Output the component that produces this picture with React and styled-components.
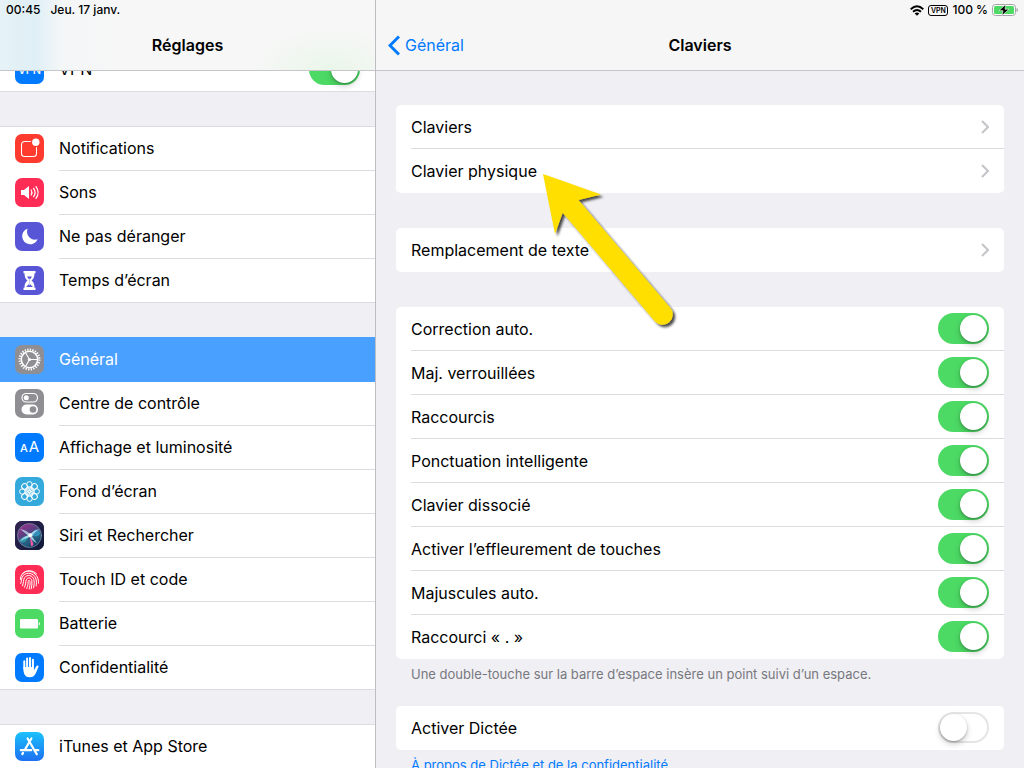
import React from 'react';
import styled, { createGlobalStyle, css } from 'styled-components';

const BLUE = '#007aff';
const GREEN = '#4cd964';
const SEPARATOR = '#dcdce0';

const GlobalStyle = createGlobalStyle`
  * {
    box-sizing: border-box;
  }
  body {
    margin: 0;
    background: #efeff4;
    color: #000;
    font-family: Inter, 'Liberation Sans', sans-serif;
    font-size: 16px;
    line-height: 20px;
  }
`;

const Screen = styled.div`
  display: grid;
  grid-template-columns: minmax(0, 47fr) minmax(0, 81fr);
  height: 100vh;
  overflow: hidden;
`;

const Pane = styled.div`
  position: relative;
  overflow: hidden;
`;

const Sidebar = styled(Pane)`
  border-right: 1px solid #bdbdc2;
`;

const Header = styled.header`
  position: sticky;
  top: 0;
  z-index: 1;
  background: #f6f6f7;
  border-bottom: 1px solid #c6c6ca;
`;

const SidebarHeader = styled(Header)`
  background: radial-gradient(ellipse 80px 45px at 88% 100%, #eaf6ea, transparent),
    linear-gradient(to right, #e6f2f6 0, #dfeff6 35px, #f3f6f7 60px, #f7f7f7 120px);
`;

const StatusBar = styled.div`
  display: flex;
  align-items: center;
  justify-content: ${({ $end }) => ($end ? 'flex-end' : 'flex-start')};
  gap: ${({ $end }) => ($end ? 4 : 10)}px;
  height: 20px;
  padding: 0 6px;
  font-size: 12px;
  font-weight: 500;
`;

const VpnBadge = styled.span`
  border: 1px solid #000;
  border-radius: 3px;
  width: 20px;
  height: 11px;
  font-size: 7px;
  font-weight: 600;
  line-height: 9px;
  text-align: center;
`;

const NavBar = styled.div`
  display: grid;
  grid-template-columns: 1fr auto 1fr;
  align-items: center;
  height: 50px;
  padding: 0 12px;
`;

const Title = styled.h1`
  grid-column: 2;
  margin: 0;
  font-size: 16px;
  font-weight: 600;
`;

const BackButton = styled.button`
  justify-self: start;
  display: flex;
  align-items: center;
  gap: 5px;
  padding: 0;
  border: 0;
  background: none;
  color: ${BLUE};
  font: inherit;
`;

const Menu = styled.nav`
  display: grid;
  gap: 34px;
  margin-top: -24px;
`;

const MenuGroup = styled.div`
  border-top: 1px solid ${SEPARATOR};
  background: #fff;
`;

const menuRow = css`
  display: flex;
  height: 44px;
  padding-left: 15px;
  gap: 15px;
  align-items: flex-start;
  color: inherit;
  text-decoration: none;
`;

const MenuLink = styled.a`
  ${menuRow}

  &:last-child {
    border-bottom: 1px solid ${SEPARATOR};
  }
  ${({ $active }) =>
    $active &&
    css`
      background: #4aa0ff;
      color: #fff;
      box-shadow: 0 -1px #4aa0ff;
    `}
`;

const MenuToggle = styled.label`
  ${menuRow}
  border-bottom: 1px solid ${SEPARATOR};
`;

const MenuLabel = styled.span`
  flex: 1;
  display: flex;
  align-items: center;
  justify-content: space-between;
  align-self: stretch;
  padding: 0 15px 1px 0;
  border-bottom: ${({ $last }) => ($last ? 0 : 1)}px solid ${({ $active }) => ($active ? 'transparent' : SEPARATOR)};
`;

const Tile = styled.span`
  display: flex;
  align-items: center;
  justify-content: center;
  width: 29px;
  height: 29px;
  margin-top: 7px;
  border-radius: 7px;
  overflow: hidden;
  background: ${({ $color }) => $color};
  color: #fff;
`;

const TileText = styled.span`
  display: flex;
  align-items: baseline;
  gap: 1px;
  font-size: 11px;
  font-weight: 500;
`;

const BigLetter = styled.span`
  font-size: 15px;
  font-weight: 400;
`;

const Content = styled.main`
  position: relative;
  padding: 34px 20px 0;
`;

const Card = styled.section`
  margin-top: ${({ $gap = 35 }) => $gap}px;
  border-radius: 5px;
  background: #fff;
`;

const cardRow = css`
  display: flex;
  align-items: center;
  justify-content: space-between;
  height: 44px;
  margin-left: 15px;
  padding-right: 15px;
  border-bottom: 1px solid ${SEPARATOR};
  color: inherit;
  text-decoration: none;

  &:last-child {
    border-bottom-color: transparent;
  }
`;

const LinkRow = styled.a`
  ${cardRow}
`;

const ToggleRow = styled.label`
  ${cardRow}
`;

const Note = styled.p`
  margin: 7px 15px 0;
  color: #78787e;
  font-size: 13px;
  line-height: 16px;
`;

const NoteLink = styled.a`
  color: ${BLUE};
  text-decoration: none;
`;

const Switch = styled.input.attrs({ type: 'checkbox' })`
  appearance: none;
  display: flex;
  align-items: center;
  width: 51px;
  height: 31px;
  margin: 0;
  padding: 0 2px;
  border-radius: 16px;
  background: #fff;
  box-shadow: inset 0 0 0 2px #e5e5e5;

  &::before {
    content: '';
    width: 27px;
    height: 27px;
    border-radius: 50%;
    background: #fff;
    box-shadow: 0 3px 6px rgba(0, 0, 0, 0.2), 0 1px 2px rgba(0, 0, 0, 0.25);
  }
  &:checked {
    justify-content: flex-end;
    background: ${GREEN};
    box-shadow: none;
  }
`;

const Pointer = styled.svg`
  position: absolute;
  top: 97px;
  left: 161px;
  pointer-events: none;
`;

const Glyph = ({ children }) => (
  <svg width="29" height="29" viewBox="0 0 29 29" fill="none" stroke="#fff" strokeLinecap="round" aria-hidden="true">
    {children}
  </svg>
);

const NotificationsIcon = () => (
  <Glyph>
    <path d="M15.5 7.5H9.8Q6.5 7.5 6.5 10.8V19.2Q6.5 22.5 9.8 22.5H18.2Q21.5 22.5 21.5 19.2V13.5" strokeWidth="1.1" />
    <circle cx="20.8" cy="8.2" r="3.7" fill="#fff" stroke="none" />
  </Glyph>
);

const SoundsIcon = () => (
  <Glyph>
    <path d="M6 12h3l5-4v13l-5-4H6z" fill="#fff" stroke="none" />
    <path d="M16.2 12q1.6 2.5 0 5M18.6 10.300q3 4.2 0 8.4M21 8.6q4.200 5.900 0 11.800" strokeWidth="1.2" />
  </Glyph>
);

const MoonIcon = () => (
  <Glyph>
    <path d="M12.6 6.7A8 8 0 1 0 22.600 17.300A8.100 8.100 0 0 1 12.600 6.700z" fill="#fff" stroke="none" />
  </Glyph>
);

const HourglassIcon = () => (
  <Glyph>
    <path d="M8.5 5h12v2.300h-1c0 4-1 5.700-3 7.200 2 1.500 3 3.200 3 7.200h1V24h-12v-2.300h1c0-4 1-5.700 3-7.200-2-1.500-3-3.200-3-7.200h-1z" fill="#fff" stroke="none" />
    <path d="M12 10.500h5l-2 3v4.500l3 3h-7l3-3v-4.500z" fill="#5856d6" stroke="none" />
    <path d="M14.500 13v6" strokeWidth="0.700" />
  </Glyph>
);

const GearIcon = () => (
  <Glyph>
    <circle cx="14.500" cy="14.500" r="8.200" strokeWidth="1.600" />
    <circle cx="14.500" cy="14.500" r="9.900" strokeWidth="2.200" strokeLinecap="butt" strokeDasharray="1.300 1.291" />
    <circle cx="14.500" cy="14.500" r="1.600" fill="#fff" stroke="none" />
    <path d="M14.500 14.500h8M14.500 14.500l-4-7M14.500 14.500l-4 7" strokeWidth="1.100" />
  </Glyph>
);

const ControlIcon = () => (
  <Glyph>
    <rect x="7" y="4.500" width="15.500" height="8.500" rx="4.250" strokeWidth="1.200" />
    <circle cx="11.300" cy="8.750" r="2.500" fill="#fff" stroke="none" />
    <rect x="6.500" y="15.500" width="16.500" height="10" rx="5" fill="#fff" stroke="none" />
    <circle cx="18" cy="20.500" r="3.300" fill="#8e8e93" stroke="none" />
  </Glyph>
);

const PETALS = [0, 45, 90, 135, 180, 225, 270, 315];

const WallpaperIcon = () => (
  <Glyph>
    {PETALS.map(angle => (
      <g key={angle} transform={`rotate(${angle} 14.5 14.5)`}>
        <circle cx="14.5" cy="7.400" r="2.800" strokeWidth="1" />
        <circle cx="14.500" cy="11.700" r="1.900" strokeWidth="0.800" />
      </g>
    ))}
  </Glyph>
);

const SiriIcon = () => (
  <Glyph>
    <defs>
      <linearGradient id="siriBack" x1="0" y1="0" x2="1" y2="1">
        <stop offset="0" stopColor="#352452" />
        <stop offset="1" stopColor="#0d1938" />
      </linearGradient>
      <linearGradient id="siriOrb" x1="0.200" y1="0" x2="0.800" y2="1">
        <stop offset="0" stopColor="#9c2f8c" />
        <stop offset="0.450" stopColor="#4f4380" />
        <stop offset="0.700" stopColor="#22607f" />
        <stop offset="1" stopColor="#152c58" />
      </linearGradient>
    </defs>
    <rect width="29" height="29" fill="url(#siriBack)" stroke="none" />
    <circle cx="14.500" cy="14.500" r="12" fill="url(#siriOrb)" stroke="#8297ae" strokeWidth="0.700" />
    <path d="M14 14Q6 16 4 20Q10 25 14 15z" fill="#21cfc7" stroke="none" opacity="0.550" />
    <path d="M15 14Q21 7 24 9Q28 17 16 15z" fill="#31b5df" stroke="none" opacity="0.600" />
    <path d="M15 15l1 10q3 0 2-3z" fill="#ff56a7" stroke="none" />
    <path d="M5 8Q11 9 15 13Q19 9 24 8Q19 12 17 15Q19 19 22 22Q17 20 15 16Q9 18 5 20Q9 15 13 14.500Q9 11 5 8z" fill="#c9f3ff" stroke="none" opacity="0.700" />
    <circle cx="15.200" cy="14.300" r="2" fill="#fff" stroke="none" />
  </Glyph>
);

const TouchIcon = () => (
  <Glyph>
    <g strokeWidth="1">
      <path d="M7.500 8.600a9.400 9.400 0 0 1 14 0" />
      <path d="M5.300 14.500c.4-9 9.200-9.500 12-7.300 4.500 2 6.500 6.500 6.200 11" />
      <path d="M5.800 18.500c1-3 .3-5.500 2.300-7.800 4-4.500 10.500-2.300 12.500 2.300 1 2.500 1 5.500.6 8" />
      <path d="M7.500 20.800c1.300-3 .6-5.800 2-8 2.600-4 8.500-2.500 9.400 2 .5 2.500.3 5.500-.3 8" />
      <path d="M9.500 22.300c1.500-3 1-5.500 1.800-7.500 1.300-3 5.300-2.200 5.600 1 .2 3-.1 5.500-.7 8" />
      <path d="M11.700 23.500c1.500-3 1.300-5 1.500-7 .4-2 1.700-1.500 1.800.2.200 2.800-.2 5-.9 7.300" />
    </g>
  </Glyph>
);

const BatteryIcon = () => (
  <Glyph>
    <rect x="5" y="10" width="18" height="9.500" rx="1" fill="#fff" stroke="none" />
    <path d="M23.800 12.800q2.400 2 0 4z" fill="#fff" stroke="none" />
  </Glyph>
);

const HandIcon = () => (
  <Glyph>
    <path d="M9.300 15V8.200M12.100 14V5.600M15 14V5M17.900 15V6.700" strokeWidth="2" />
    <path d="M8.300 14h10.600v3.200l2.400-4c.7-1.100 2.700-.7 2.200.6-1.100 2.700-2.200 5.700-3.600 8q-1.500 2.500-5 2.500-4.500 0-5.700-3.500-.9-2.300-.9-5z" fill="#fff" stroke="none" />
  </Glyph>
);

const AppStoreIcon = () => (
  <Glyph>
    <path d="M16.400 6.500L9.700 18M8 20.900l-.7 1.200M12.600 6.500l9.200 15.700M5.800 18.200h10.400M20.500 18.200h2.800" strokeWidth="2.200" />
  </Glyph>
);

const Chevron = () => (
  <svg width="8" height="14" viewBox="0 0 8 14" fill="none" stroke="#c4c4c9" strokeWidth="2" aria-hidden="true">
    <path d="M1 1l6 6-6 6" />
  </svg>
);

const MAIN_MENU = [
  [
    { label: 'Notifications', color: '#ff3b30', icon: <NotificationsIcon /> },
    { label: 'Sons', color: '#ff2d55', icon: <SoundsIcon /> },
    { label: 'Ne pas déranger', color: '#5856d6', icon: <MoonIcon /> },
    { label: 'Temps d’écran', color: '#5856d6', icon: <HourglassIcon /> },
  ],
  [
    { label: 'Général', color: '#8e8e93', icon: <GearIcon />, active: true },
    { label: 'Centre de contrôle', color: '#8e8e93', icon: <ControlIcon /> },
    {
      label: 'Affichage et luminosité',
      color: BLUE,
      icon: (
        <TileText>
          A<BigLetter>A</BigLetter>
        </TileText>
      ),
    },
    { label: 'Fond d’écran', color: '#34aadc', icon: <WallpaperIcon /> },
    { label: 'Siri et Rechercher', color: '#20204a', icon: <SiriIcon /> },
    { label: 'Touch ID et code', color: '#ff2d55', icon: <TouchIcon /> },
    { label: 'Batterie', color: GREEN, icon: <BatteryIcon /> },
    { label: 'Confidentialité', color: BLUE, icon: <HandIcon /> },
  ],
  [
    {
      label: 'iTunes et App Store',
      color: 'linear-gradient(#1bc1fb, #1d70f2)',
      icon: <AppStoreIcon />,
    },
  ],
];

const KEYBOARD_OPTIONS = [
  'Correction auto.',
  'Maj. verrouillées',
  'Raccourcis',
  'Ponctuation intelligente',
  'Clavier dissocié',
  'Activer l’effleurement de touches',
  'Majuscules auto.',
  'Raccourci « . »',
];

function SettingsMenu() {
  return (
    <Menu>
      <MenuGroup>
        <MenuToggle>
          <Tile $color={BLUE}>
            <TileText>VPN</TileText>
          </Tile>
          <MenuLabel $last>
            VPN
            <Switch defaultChecked />
          </MenuLabel>
        </MenuToggle>
      </MenuGroup>
      {MAIN_MENU.map(group => (
        <MenuGroup key={group[0].label}>
          {group.map(({ label, color, icon, active }, i) => (
            <MenuLink key={label} href="#" $active={active}>
              <Tile $color={color}>{icon}</Tile>
              <MenuLabel $active={active} $last={i === group.length - 1}>
                {label}
              </MenuLabel>
            </MenuLink>
          ))}
        </MenuGroup>
      ))}
    </Menu>
  );
}

function DeviceStatus() {
  return (
    <StatusBar $end>
      <svg width="14" height="11" viewBox="0 0 14 11" fill="none" stroke="#000" strokeWidth="1.900" aria-hidden="true">
        <path d="M.7 4.200q6.300-5.800 12.600 0M3 6.700q4-3.600 8 0" />
        <path d="M4.700 8.400q2.300-2 4.600 0L7 10.700z" fill="#000" stroke="none" />
      </svg>
      <VpnBadge>VPN</VpnBadge>
      <span>100 %</span>
      <svg width="26" height="12" viewBox="0 0 26 12" aria-hidden="true">
        <rect x="0.500" y="0.500" width="23" height="11" rx="3" fill="#fff" stroke="#a3a3a6" />
        <rect x="2" y="2" width="20" height="8" rx="1.500" fill={GREEN} />
        <path d="M24.500 4v4q1.500-.5 1.500-2t-1.500-2z" fill="#a3a3a6" />
        <path d="M13.500 0.500L7 6.700h4L10 11.500l7-6.300h-4z" fill="#000" stroke="#fff" strokeWidth="0.600" />
      </svg>
    </StatusBar>
  );
}

function KeyboardSettings() {
  return (
    <Content>
      <Card $gap={0}>
        <LinkRow href="#">
          Claviers
          <Chevron />
        </LinkRow>
        <LinkRow href="#">
          Clavier physique
          <Chevron />
        </LinkRow>
      </Card>
      <Card>
        <LinkRow href="#">
          Remplacement de texte
          <Chevron />
        </LinkRow>
      </Card>
      <Card>
        {KEYBOARD_OPTIONS.map(option => (
          <ToggleRow key={option}>
            {option}
            <Switch defaultChecked />
          </ToggleRow>
        ))}
      </Card>
      <Note>Une double-touche sur la barre d’espace insère un point suivi d’un espace.</Note>
      <Card $gap={24}>
        <ToggleRow>
          Activer Dictée
          <Switch />
        </ToggleRow>
      </Card>
      <Note>
        <NoteLink href="#">À propos de Dictée et de la confidentialité</NoteLink>
      </Note>
      <Pointer width="150" height="165" viewBox="0 0 150 165" aria-hidden="true">
        <defs>
          <filter id="pointerShadow" x="-10%" y="-10%" width="120%" height="120%">
            <feDropShadow dx="2.500" dy="2.500" stdDeviation="1.200" floodColor="#000" floodOpacity="0.700" />
          </filter>
        </defs>
        <path
          d="M6 6L64 26.500L41.500 32L133 139.500A10 10 0 0 1 118 153.500L25.700 44.700L18 66z"
          fill="#ffdf00"
          filter="url(#pointerShadow)"
        />
      </Pointer>
    </Content>
  );
}

function App() {
  return (
    <Screen>
      <GlobalStyle />
      <Sidebar>
        <SidebarHeader>
          <StatusBar>
            <span>00:45</span>
            <span>Jeu. 17 janv.</span>
          </StatusBar>
          <NavBar>
            <Title>Réglages</Title>
          </NavBar>
        </SidebarHeader>
        <SettingsMenu />
      </Sidebar>
      <Pane>
        <Header>
          <DeviceStatus />
          <NavBar>
            <BackButton type="button">
              <svg width="12" height="21" viewBox="0 0 12 21" fill="none" stroke={BLUE} strokeWidth="3" aria-hidden="true">
                <path d="M11 1.500l-9 9 9 9" />
              </svg>
              Général
            </BackButton>
            <Title as="h2">Claviers</Title>
          </NavBar>
        </Header>
        <KeyboardSettings />
      </Pane>
    </Screen>
  );
}

export default App;
